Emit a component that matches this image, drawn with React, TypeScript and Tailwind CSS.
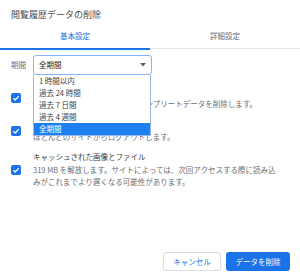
const font = { fontFamily: '"Noto Sans CJK JP", "Noto Sans", sans-serif' };

const periods = ['1 時間以内', '過去 24 時間', '過去 7 日間', '過去 4 週間', '全期間'];

function Check() {
  return (
    <div className="w-[10px] h-[10px] shrink-0 rounded-[2px] bg-[#1a73e8] flex items-center justify-center">
      <svg width="8" height="8" viewBox="0 0 8 8">
        <path d="M1.3 4.1 L3.2 6 L6.8 2.1" fill="none" stroke="#fff" strokeWidth="1.3" />
      </svg>
    </div>
  );
}

function Row({ title, lines }: { title: string; lines: string[] }) {
  return (
    <div className="flex items-center">
      <div className="w-[22px] shrink-0">
        <Check />
      </div>
      <div className="text-[7.5px] leading-[12.5px] whitespace-nowrap">
        <div className="text-[#3c4043]">{title}</div>
        {lines.map((l) => (
          <div key={l} className="text-[#6b6f74]">{l}</div>
        ))}
      </div>
    </div>
  );
}

export default function App() {
  return (
    <div className="w-[300px] h-[279px] bg-white flex flex-col overflow-hidden" style={font}>
      <div className="pl-[11px] pt-[9px] h-[23px] text-[9px] leading-[12px] text-[#4a4d51]">
        閲覧履歴データの削除
      </div>

      <div className="flex border-b border-[#e3e3e3]">
        <div className="relative flex-1 h-[25px] flex items-center justify-center text-[7.5px] text-[#1a73e8]">
          基本設定
          <div className="absolute left-0 right-0 -bottom-[2px] h-[2px] bg-[#1a73e8]" />
        </div>
        <div className="flex-1 h-[25px] flex items-center justify-center text-[7.5px] text-[#6b6f74]">
          詳細設定
        </div>
      </div>

      <div className="px-[11px] pt-[6px] flex flex-col">
        <div className="flex items-center">
          <div className="w-[22px] text-[7.5px] text-[#6b6f74]">期間</div>
          <div className="relative">
            <div className="w-[119px] h-[20px] border border-[#8ab4f8] rounded-[3px] flex items-center justify-between pl-[5px] pr-[5px] text-[7.5px] text-[#202124]">
              <span>全期間</span>
              <svg width="6" height="4" viewBox="0 0 6 4">
                <path d="M0 0 L6 0 L3 3.5 Z" fill="#5f6368" />
              </svg>
            </div>
            <div className="absolute z-10 left-0 top-full w-[118px] bg-white border-x border-b border-[#9bb9e8] flex flex-col">
              {periods.map((p, i) => (
                <div
                  key={p}
                  className={
                    i === periods.length - 1
                      ? 'h-[12px] pl-[5px] flex items-center text-[7.5px] bg-[#1e80f0] text-white'
                      : 'h-[12px] pl-[5px] flex items-center text-[7.5px] text-[#3c4043]'
                  }
                >
                  {p}
                </div>
              ))}
            </div>
          </div>
        </div>

        <div className="mt-[10px] flex flex-col gap-[8px]">
          <Row title="閲覧履歴" lines={['アドレスバーから履歴とオートコンプリートデータを削除します。']} />
          <Row title="Cookie と他のサイトデータ" lines={['ほとんどのサイトからログアウトします。']} />
          <Row
            title="キャッシュされた画像とファイル"
            lines={[
              '319 MB を解放します。サイトによっては、次回アクセスする際に読み込',
              'みがこれまでより遅くなる可能性があります。',
            ]}
          />
        </div>
      </div>

      <div className="mt-auto flex justify-end gap-[5px] pr-[10px] pb-[8px]">
        <button className="w-[58px] h-[19px] rounded-[3px] border border-[#dadce0] bg-white text-[7.5px] text-[#1a73e8]">
          キャンセル
        </button>
        <button className="w-[64px] h-[19px] rounded-[3px] bg-[#1a73e8] text-[7.5px] text-white">
          データを削除
        </button>
      </div>
    </div>
  );
}
